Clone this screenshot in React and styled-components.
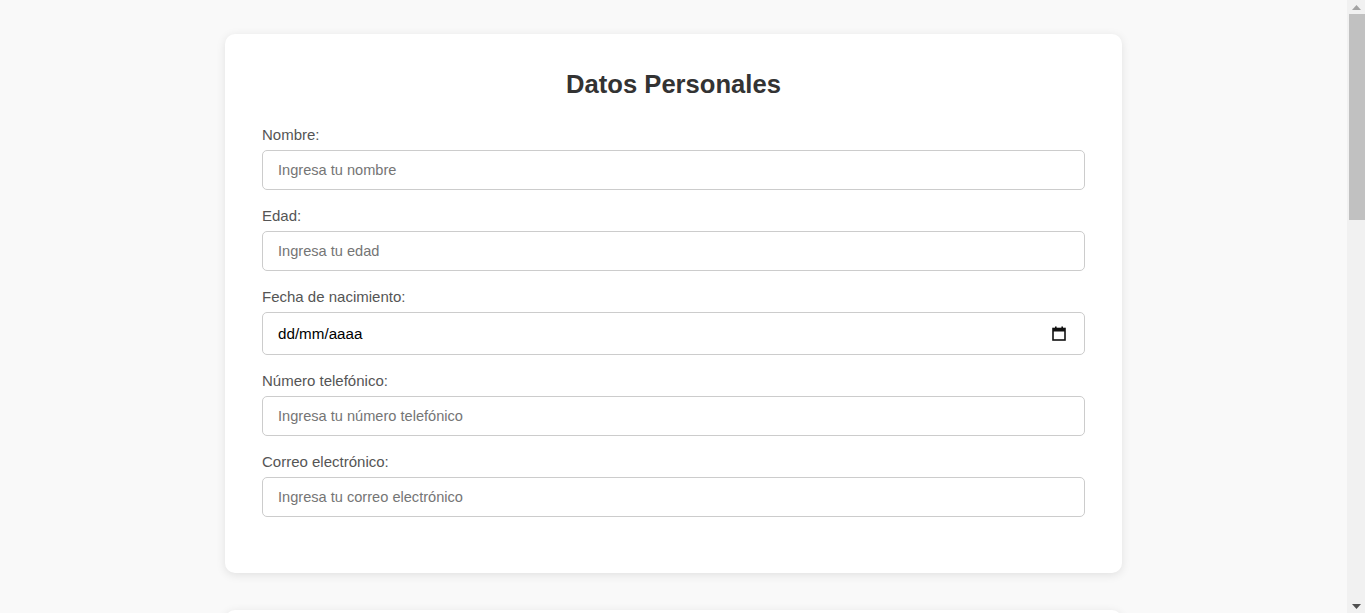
import React from 'react';
import styled, { createGlobalStyle } from 'styled-components';

const GlobalStyle = createGlobalStyle`
	html, body {
		margin: 0;
		padding: 0;
		background: #f9f9f9;
		font-family: "Liberation Sans", Arial, sans-serif;
		color: #333;
	}
`;

const Page = styled.div`
	display: flex;
	flex-direction: column;
	align-items: center;
	gap: 37px;
	padding: 34px 18px 34px 0;
`;

// drawn scrollbar, sits over the right edge of the page
const ScrollTrack = styled.div`
	position: fixed;
	top: 0;
	right: 0;
	bottom: 0;
	width: 18px;
	background: #f1f1f1;
	display: flex;
	flex-direction: column;
	align-items: flex-end;
`;

const Arrow = styled.div`
	display: flex;
	justify-content: center;
	align-items: center;
	width: 17px;
	height: 14px;
	margin-top: ${({ down }) => down ? 'auto' : '0'};
`;

const Thumb = styled.div`
	width: 16px;
	height: 206px;
	background: #c1c1c1;
`;

const Card = styled.section`
	box-sizing: border-box;
	width: 897px;
	min-height: ${({ tall }) => tall ? '520px' : 'auto'};
	padding: 36px 37px 39px;
	background: #fff;
	border-radius: 10px;
	box-shadow: 0 2px 10px rgba(0, 0, 0, 0.1);
`;

const Title = styled.h2`
	margin: 0 0 28px;
	text-align: center;
	font-size: 25.6px;
	line-height: 28px;
	font-weight: bold;
	color: #333;
`;

const Field = styled.div`
	display: flex;
	flex-direction: column;
	margin-bottom: 17px;
`;

const Label = styled.label`
	font-size: 15px;
	line-height: 17px;
	color: #555;
	margin-bottom: 7px;
`;

const Input = styled.input`
	box-sizing: border-box;
	width: 100%;
	height: 40px;
	padding: 0 15px;
	border: 1px solid #ccc;
	border-radius: 5px;
	font-family: inherit;
	font-size: 14.6px;
	color: #333;
	background: #fff;
	outline: none;
	&::placeholder {
		color: #757575;
	}
`;

const DateBox = styled.div`
	box-sizing: border-box;
	display: flex;
	align-items: center;
	height: 43px;
	padding: 0 15px;
	border: 1px solid #ccc;
	border-radius: 5px;
	background: #fff;
`;

const DateText = styled.input`
	flex: 1;
	border: none;
	outline: none;
	padding: 0;
	font-family: inherit;
	font-size: 15.2px;
	color: #000;
	background: transparent;
	&::placeholder {
		color: #000;
	}
`;

const CalendarIcon = () => (
	<svg width="14" height="15" viewBox="0 0 14 15" style={{ marginRight: 3 }}>
		<rect x="1" y="2.5" width="12" height="11.5" fill="none" stroke="#111" strokeWidth="1.6" />
		<rect x="1" y="2.5" width="12" height="3" fill="#111" />
		<rect x="3" y="0.5" width="1.6" height="3" fill="#111" />
		<rect x="9.4" y="0.5" width="1.6" height="3" fill="#111" />
	</svg>
);

const personal = [
	{ id: 'nombre', label: 'Nombre:', placeholder: 'Ingresa tu nombre' },
	{ id: 'edad', label: 'Edad:', placeholder: 'Ingresa tu edad' },
	{ id: 'fecha', label: 'Fecha de nacimiento:', date: true },
	{ id: 'telefono', label: 'Número telefónico:', placeholder: 'Ingresa tu número telefónico' },
	{ id: 'correo', label: 'Correo electrónico:', placeholder: 'Ingresa tu correo electrónico' },
];

const address = [
	{ id: 'calle', label: 'Calle:', placeholder: 'Ingresa tu calle' },
	{ id: 'ciudad', label: 'Ciudad:', placeholder: 'Ingresa tu ciudad' },
	{ id: 'estado', label: 'Estado:', placeholder: 'Ingresa tu estado' },
	{ id: 'cp', label: 'Código postal:', placeholder: 'Ingresa tu código postal' },
];

const studies = [
	{ id: 'escuela', label: 'Escuela:', placeholder: 'Ingresa tu escuela' },
	{ id: 'carrera', label: 'Carrera:', placeholder: 'Ingresa tu carrera' },
	{ id: 'semestre', label: 'Semestre:', placeholder: 'Ingresa tu semestre' },
	{ id: 'promedio', label: 'Promedio:', placeholder: 'Ingresa tu promedio' },
];

const FormCard = ({ title, fields, tall }) => (
	<Card tall={tall}>
		<Title>{title}</Title>
		{fields.map(f => (
			<Field key={f.id}>
				<Label htmlFor={f.id}>{f.label}</Label>
				{f.date ? (
					<DateBox>
						<DateText id={f.id} placeholder="dd/mm/aaaa" />
						<CalendarIcon />
					</DateBox>
				) : (
					<Input id={f.id} type="text" placeholder={f.placeholder} />
				)}
			</Field>
		))}
	</Card>
);

export default function App() {
	return (
		<>
			<GlobalStyle />
			<Page>
				<FormCard title="Datos Personales" fields={personal} />
				<FormCard title="Dirección" fields={address} tall />
				<FormCard title="Datos Académicos" fields={studies} tall />
			</Page>
			<ScrollTrack>
				<Arrow>
					<svg width="9" height="5" viewBox="0 0 9 5"><polygon points="0,5 9,5 4.5,0" fill="#a3a3a3" /></svg>
				</Arrow>
				<Thumb />
				<Arrow down>
					<svg width="9" height="5" viewBox="0 0 9 5"><polygon points="0,0 9,0 4.5,5" fill="#505050" /></svg>
				</Arrow>
			</ScrollTrack>
		</>
	);
}
